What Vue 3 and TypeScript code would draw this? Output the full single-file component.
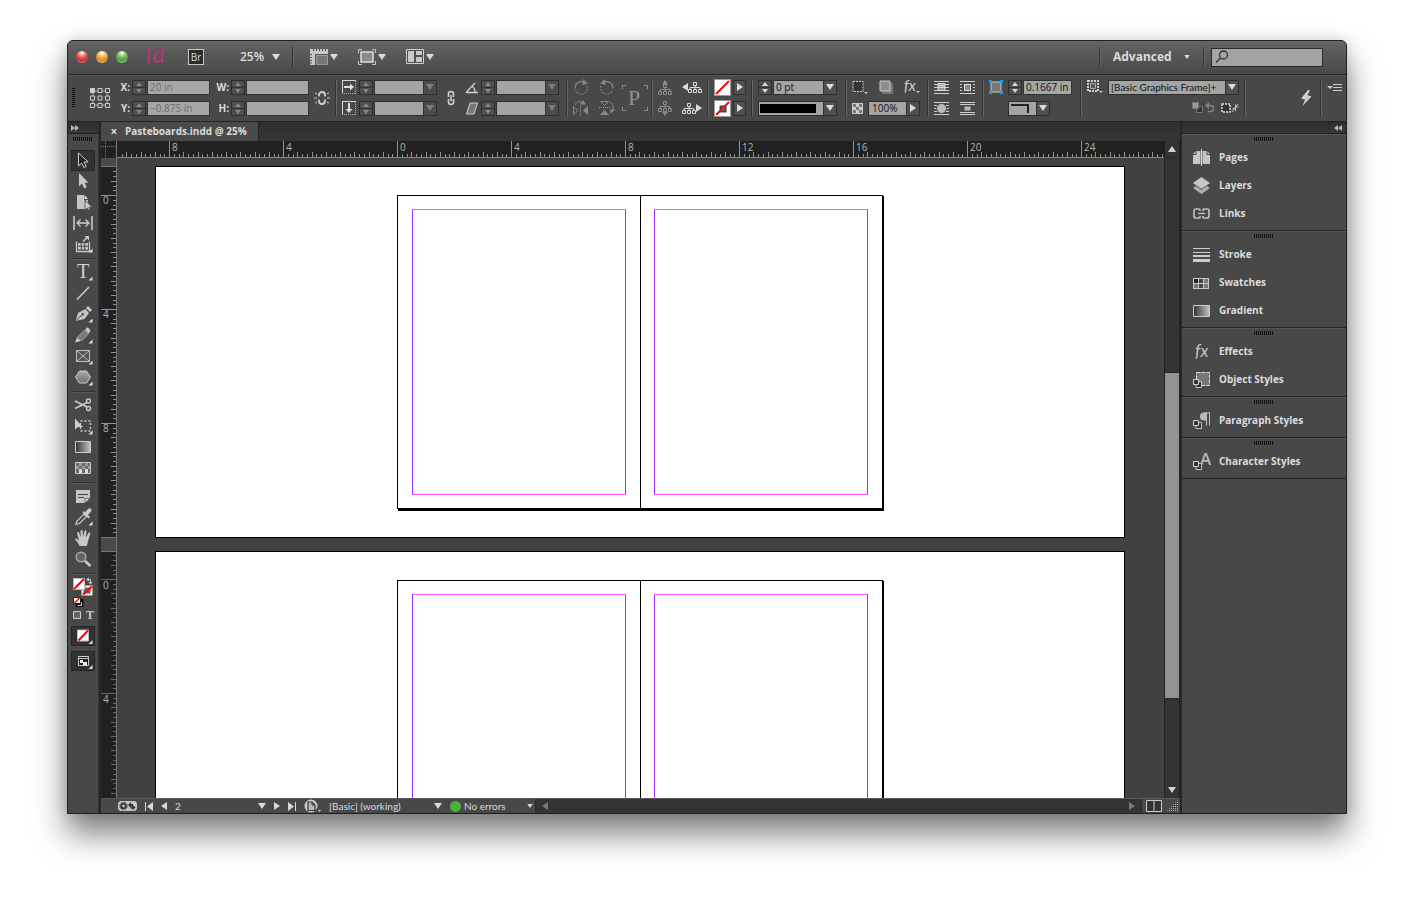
<script setup lang="ts">
import { computed, onBeforeUnmount, onMounted, ref } from 'vue'

interface Tick { pos: number; size: number; label: string }
interface Tool { id: string; name: string; more?: boolean }
interface PanelItem { id: string; name: string }

const PX_PER_INCH = 28.5

function ticks(origin: number, from: number, to: number, full: number): Tick[] {
  const list: Tick[] = []
  const step = PX_PER_INCH / 6
  const first = Math.ceil((from - origin) / step)
  const last = Math.floor((to - origin) / step)
  for (let i = first; i <= last; i++) {
    const labelled = i % 24 === 0
    list.push({
      pos: Math.round(origin + i * step),
      size: labelled ? full : i % 3 === 0 ? 5 : 3,
      label: labelled ? String(Math.abs(i / 6)) : '',
    })
  }
  return list
}

const rulerH = ref<SVGSVGElement | null>(null)
const rulerV = ref<SVGSVGElement | null>(null)
const rulerWidth = ref(0)
const rulerHeight = ref(0)

function measure() {
  rulerWidth.value = rulerH.value?.getBoundingClientRect().width ?? 0
  rulerHeight.value = rulerV.value?.getBoundingClientRect().height ?? 0
}

onMounted(() => {
  measure()
  window.addEventListener('resize', measure)
})
onBeforeUnmount(() => window.removeEventListener('resize', measure))

const horizontal = computed(() => ticks(280, 2, rulerWidth.value - 2, 16))
const verticalTop = ticks(37, 9, 376, 15)
const verticalBottom = computed(() => ticks(421, 394, Math.min(765, rulerHeight.value), 15))

const toolGroups: Tool[][] = [
  [
    { id: 'selection', name: 'Selection Tool' },
    { id: 'direct', name: 'Direct Selection Tool' },
    { id: 'page', name: 'Page Tool' },
    { id: 'gap', name: 'Gap Tool' },
    { id: 'collector', name: 'Content Collector Tool', more: true },
  ],
  [
    { id: 'type', name: 'Type Tool', more: true },
    { id: 'line', name: 'Line Tool' },
    { id: 'pen', name: 'Pen Tool', more: true },
    { id: 'pencil', name: 'Pencil Tool', more: true },
    { id: 'frame', name: 'Rectangle Frame Tool', more: true },
    { id: 'polygon', name: 'Polygon Tool', more: true },
  ],
  [
    { id: 'scissors', name: 'Scissors Tool' },
    { id: 'transform', name: 'Free Transform Tool', more: true },
    { id: 'gradient', name: 'Gradient Swatch Tool' },
    { id: 'feather', name: 'Gradient Feather Tool' },
  ],
  [
    { id: 'note', name: 'Note Tool' },
    { id: 'eyedropper', name: 'Eyedropper Tool', more: true },
    { id: 'hand', name: 'Hand Tool' },
    { id: 'zoom', name: 'Zoom Tool' },
  ],
]

const panels: PanelItem[][] = [
  [{ id: 'p-pages', name: 'Pages' }, { id: 'p-layers', name: 'Layers' }, { id: 'p-links', name: 'Links' }],
  [{ id: 'p-stroke', name: 'Stroke' }, { id: 'p-swatches', name: 'Swatches' }, { id: 'p-gradient', name: 'Gradient' }],
  [{ id: 'p-effects', name: 'Effects' }, { id: 'p-object', name: 'Object Styles' }],
  [{ id: 'p-paragraph', name: 'Paragraph Styles' }],
  [{ id: 'p-character', name: 'Character Styles' }],
]

const viewMenus = [
  { id: 'v-options', name: 'View Options' },
  { id: 'v-screen', name: 'Screen Mode' },
  { id: 'v-arrange', name: 'Arrange Documents' },
]
</script>

<template>
  <svg class="sprite" aria-hidden="true">
    <defs>
      <linearGradient id="lg-dark"><stop offset="0" stop-color="#333" /><stop offset="1" stop-color="#c4c4c4" /></linearGradient>
      <linearGradient id="lg-light" x2="0" y2="1"><stop offset="0" stop-color="#a8a8a8" /><stop offset="1" stop-color="#6f6f6f" /></linearGradient>

      <symbol id="tri-down" viewBox="0 0 8 6"><path d="M0 0h8L4 6z" fill="currentColor" /></symbol>
      <symbol id="tri-right" viewBox="0 0 6 8"><path d="M0 0l6 4-6 4z" fill="currentColor" /></symbol>
      <symbol id="tri-left" viewBox="0 0 6 8"><path d="M6 0L0 4l6 4z" fill="currentColor" /></symbol>
      <symbol id="tri-up" viewBox="0 0 8 6"><path d="M0 6h8L4 0z" fill="currentColor" /></symbol>
      <symbol id="dbl-right" viewBox="0 0 8 6"><path d="M0 0l4 3-4 3zM4 0l4 3-4 3z" fill="currentColor" /></symbol>
      <symbol id="dbl-left" viewBox="0 0 8 6"><path d="M4 0L0 3l4 3zM8 0L4 3l4 3z" fill="currentColor" /></symbol>
      <symbol id="first" viewBox="0 0 8 9"><path d="M0 0h1v9H0zM8 0v9L2 4.500z" fill="currentColor" /></symbol>
      <symbol id="last" viewBox="0 0 8 9"><path d="M7 0h1v9H7zM0 0v9l6-4.500z" fill="currentColor" /></symbol>

      <symbol id="v-options" viewBox="0 0 18 16">
        <path d="M0 0h18v5H5v11H0z" fill="#c8c8c8" />
        <path d="M3.500 0v2M6.500 0v2M9.500 0v2M12.500 0v2M15.500 0v2M0 5.500h2M0 8.500h2M0 11.500h2M0 14h2" stroke="#4a4a4a" fill="none" />
        <path d="M6.500 6.500h11v9h-11z" fill="#777" stroke="#999" />
      </symbol>
      <symbol id="v-screen" viewBox="0 0 18 16">
        <path d="M.5 4V.5H4M14 .5h3.500V4M17.500 12v3.500H14M4 15.500H.5V12" stroke="#c8c8c8" fill="none" />
        <path d="M3 3h12v10H3z" fill="#8a8a8a" stroke="#dedede" stroke-width="1.500" />
      </symbol>
      <symbol id="v-arrange" viewBox="0 0 18 16">
        <path d="M.5 .5h17v14H.5z" fill="#505050" stroke="#d0d0d0" />
        <path d="M2 2h6v11H2zM10 2h6v4h-6zM10 8h6v5h-6z" fill="#c8c8c8" />
      </symbol>

      <symbol id="refpoint" viewBox="0 0 20 20">
        <path d="M3 3h14v14H3z" fill="none" stroke="#a5a5a5" />
        <g fill="#454545" stroke="#cfcfcf">
          <path d="M.5.5h4v4h-4z" fill="#cfcfcf" />
          <path d="M8 .5h4v4H8zM15.500.5h4v4h-4zM.5 8h4v4h-4zM8 8h4v4H8zM15.500 8h4v4h-4zM.5 15.500h4v4h-4zM8 15.500h4v4H8zM15.500 15.500h4v4h-4z" />
        </g>
      </symbol>
      <symbol id="unlinked" viewBox="0 0 16 16">
        <path d="M5 6.500V5a3 3 0 0 1 6 0v1.500M5 9.500V11a3 3 0 0 0 6 0V9.500" fill="none" stroke="#cfcfcf" stroke-width="1.800" />
        <path d="M1 3l2 1M0 8h3M1 13l2-1M15 3l-2 1M16 8h-3M15 13l-2-1" stroke="#cfcfcf" />
      </symbol>
      <symbol id="linked" viewBox="0 0 10 16">
        <path d="M2.500 7V4a2.500 2.500 0 0 1 5 0v3M2.500 9v3a2.500 2.500 0 0 0 5 0V9M5 5v6" fill="none" stroke="#cfcfcf" stroke-width="1.600" />
      </symbol>
      <symbol id="scale-x" viewBox="0 0 14 14">
        <path d="M0 .5h14M.5 1v12" stroke="#d5d5d5" /><path d="M13.500 1v13M0 13.500h14" stroke="#aaa" stroke-dasharray="1 1" />
        <path d="M2 7h6" stroke="#ddd" stroke-width="2" /><path d="M8 3.500L12 7l-4 3.500z" fill="#ddd" />
      </symbol>
      <symbol id="scale-y" viewBox="0 0 14 14">
        <path d="M0 .5h14M.5 1v12" stroke="#d5d5d5" /><path d="M13.500 1v13M0 13.500h14" stroke="#aaa" stroke-dasharray="1 1" />
        <path d="M7 2v6" stroke="#ddd" stroke-width="2" /><path d="M3.500 8L7 12l3.500-4z" fill="#ddd" />
      </symbol>
      <symbol id="angle" viewBox="0 0 14 14"><path d="M1 12.500h12M1.500 12L10 3M7 6.500c2 1 3 3 3 6" fill="none" stroke="#cfcfcf" stroke-width="1.300" /></symbol>
      <symbol id="shear" viewBox="0 0 14 14"><path d="M5 2h7.500L9 13H1.500z" fill="#777" stroke="#cfcfcf" /></symbol>
      <symbol id="rot-cw" viewBox="0 0 16 16">
        <path d="M2.200 9.500A6 6 0 0 1 11 3.500" fill="none" stroke="#8a8a8a" stroke-width="1.300" /><path d="M14 7a6 6 0 0 1-11.500 4" fill="none" stroke="#8a8a8a" stroke-width="1.300" stroke-dasharray="1.500 1.500" /><path d="M10 0l5 4.500-5.500 1.500z" fill="#8a8a8a" />
      </symbol>
      <symbol id="rot-ccw" viewBox="0 0 16 16">
        <path d="M13.800 9.500A6 6 0 0 0 5 3.500" fill="none" stroke="#8a8a8a" stroke-width="1.300" /><path d="M2 7a6 6 0 0 0 11.500 4" fill="none" stroke="#8a8a8a" stroke-width="1.300" stroke-dasharray="1.500 1.500" /><path d="M6 0L1 4.500 6.500 6z" fill="#8a8a8a" />
      </symbol>
      <symbol id="flip-h" viewBox="0 0 16 16">
        <path d="M7.500 1v15" stroke="#999" stroke-dasharray="1 1" /><path d="M15 6v9l-5-4.500z" fill="#8a8a8a" /><path d="M.5 6.500v8l4.500-4z" fill="none" stroke="#8a8a8a" />
        <path d="M2 5c1-3.500 6-4.500 9-2" fill="none" stroke="#8a8a8a" /><path d="M10 0l3 4.500-5 0z" fill="#8a8a8a" />
      </symbol>
      <symbol id="flip-v" viewBox="0 0 16 16">
        <path d="M0 7.500h12" stroke="#999" stroke-dasharray="1 1" /><path d="M1 15h9l-4.500-5z" fill="#8a8a8a" /><path d="M1.500 1.500h8l-4 4z" fill="none" stroke="#8a8a8a" />
        <path d="M11 2c3 2 4 5 2.500 9" fill="none" stroke="#8a8a8a" /><path d="M16 10l-4.500 3.500V9z" fill="#8a8a8a" />
      </symbol>
      <symbol id="container" viewBox="0 0 26 26">
        <path d="M.5 4V.5H4M22 .5h3.500V4M25.500 22v3.500H22M4 25.500H.5V22" stroke="#8f8f8f" fill="none" />
        <text x="6" y="20" font-family="Liberation Serif, serif" font-size="22" fill="#8f8f8f">P</text>
      </symbol>
      <symbol id="tree" viewBox="0 0 14 11">
        <path d="M7 3v5M2 8V5.500h10V8" fill="none" stroke="currentColor" /><path d="M5.500.5h3v3h-3zM.5 7.500h3v3h-3zM5.500 7.500h3v3h-3zM10.500 7.500h3v3h-3z" fill="#484848" stroke="currentColor" />
      </symbol>
      <symbol id="sw-none" viewBox="0 0 17 17"><path d="M.5.5h16v16H.5z" fill="#fff" stroke="#999" /><path d="M2 15L15 2" stroke="#f00" stroke-width="2" /></symbol>
      <symbol id="sw-stroke" viewBox="0 0 17 17"><path d="M.5.5h16v16H.5z" fill="#fff" stroke="#999" /><path d="M6.500 6.500h5v5h-5z" fill="#888" stroke="#444" stroke-width="2" /><path d="M2 15L15 2" stroke="#f00" stroke-width="2" /></symbol>
      <symbol id="dashbox" viewBox="0 0 16 14"><path d="M1 1.500h10v10H1z" fill="#333" stroke="#cfcfcf" stroke-dasharray="2 1" /><path d="M12 12h4l-2 2z" fill="#ccc" /></symbol>
      <symbol id="shadowbox" viewBox="0 0 14 14"><path d="M3 3h11v11H3z" fill="#777" /><path d="M1 1h10v10H1z" fill="#8d8d8d" stroke="#c8c8c8" /></symbol>
      <symbol id="fx" viewBox="0 0 17 16"><text x="1" y="12" font-family="Lato, sans-serif" font-size="15" font-style="italic" fill="#cfcfcf">fx</text><path d="M13 12h4l-2 2z" fill="#ccc" /></symbol>
      <symbol id="opacity" viewBox="0 0 11 11"><path d="M0 0h11v11H0z" fill="#ccc" /><path d="M1 1h3v3H1zM7 1h3v3H7zM4 4h3v3H4zM1 7h3v3H1zM7 7h3v3H7z" fill="#777" /></symbol>
      <symbol id="wrap-none" viewBox="0 0 15 14"><path d="M0 1.500h15M0 4.500h15M0 7.500h15M0 10.500h15M0 13.500h15" stroke="#cfcfcf" /><path d="M4 3.500h7v7H4z" fill="#999" stroke="#ddd" /><path d="M4 5.500h7M4 7.500h7" stroke="#ddd" /></symbol>
      <symbol id="wrap-box" viewBox="0 0 15 14"><path d="M0 1.500h15M0 13.500h15M0 4.500h2M13 4.500h2M0 7.500h2M13 7.500h2M0 10.500h2M13 10.500h2" stroke="#cfcfcf" /><path d="M4.500 4.500h6v6h-6z" fill="#888" stroke="#ddd" /></symbol>
      <symbol id="wrap-shape" viewBox="0 0 15 14"><path d="M0 1.500h15M0 4.500h15M0 7.500h15M0 10.500h15M0 13.500h15" stroke="#cfcfcf" /><circle cx="7.500" cy="7.500" r="5" fill="#bbb" stroke="#484848" /></symbol>
      <symbol id="wrap-jump" viewBox="0 0 15 14"><path d="M0 1.500h15M0 3.500h15M0 11.500h15M0 13.500h15" stroke="#cfcfcf" /><path d="M4.500 5.500h6v4h-6z" fill="#bbb" /></symbol>
      <symbol id="corner" viewBox="0 0 14 14"><path d="M2 2h10v10H2z" fill="#777" stroke="#ccc" /><path d="M0 0h3v3H0zM11 0h3v3h-3zM0 11h3v3H0zM11 11h3v3h-3z" fill="#13a3f5" /></symbol>
      <symbol id="frame-style" viewBox="0 0 16 14"><path d="M1 1h10v10H1z" fill="none" stroke="#cfcfcf" stroke-width="2" stroke-dasharray="2 1" /><path d="M3.500 3.500h5v5h-5z" fill="#555" stroke="#aaa" /><path d="M12 11h4l-2 2z" fill="#ccc" /></symbol>
      <symbol id="clear" viewBox="0 0 22 12"><path d="M4.500 4.500h6v6h-6z" fill="#333" stroke="#777" /><path d="M.5.5h6v6h-6z" fill="#999" stroke="#777" /><path d="M15 3.500h3.500a3 3 0 0 1 0 6H16" fill="none" stroke="#858585" stroke-width="1.500" /><path d="M13 3.500L17 0v7z" fill="#858585" /></symbol>
      <symbol id="redefine" viewBox="0 0 18 12"><path d="M1 2h8v8H1z" fill="#333" stroke="#ddd" stroke-width="1.500" stroke-dasharray="2 1" /><path d="M11 10l6-8M11.500 6.500h3V9M17.500 5h-3V2.500" fill="none" stroke="#c8c8c8" /></symbol>
      <symbol id="bolt" viewBox="0 0 12 16"><path d="M8 0L1 8.500l4 1L2.500 16 11.500 6.500l-4-1.200L10 0z" fill="#cfcfcf" /></symbol>
      <symbol id="panel-menu" viewBox="0 0 15 10"><path d="M0 3h6L3 6z" fill="#ccc" /><path d="M6 1.500h9M6 4.500h9M6 7.500h9" stroke="#ccc" /></symbol>
      <symbol id="search" viewBox="0 0 14 14"><circle cx="8.500" cy="5" r="4" fill="none" stroke="#333" stroke-width="1.300" /><path d="M5.500 8L1 12.500" stroke="#333" stroke-width="1.500" /></symbol>

      <symbol id="selection" viewBox="0 0 24 21"><path d="M7.500 3v13l3.200-3 2.200 4.500 2.300-1-2.200-4.500h4.200z" fill="#222" stroke="#cfcfcf" /></symbol>
      <symbol id="direct" viewBox="0 0 24 21"><path d="M8 2v13.500l3-3 2.200 5 2.500-1.200-2.200-4.600h4z" fill="#c8c8c8" /></symbol>
      <symbol id="page" viewBox="0 0 24 21"><path d="M6 3h7v5h4v9H6z" fill="#c4c4c4" /><path d="M13.500 3l3.500 4h-3.500z" fill="#ddd" /><path d="M14 8v10l2.500-2 1.200 2.500 1.500-.8-1.200-2.400H21z" fill="#ccc" stroke="#444" stroke-width=".8" /></symbol>
      <symbol id="gap" viewBox="0 0 24 21"><path d="M3 3v14M21 3v14" stroke="#c8c8c8" stroke-width="1.600" /><path d="M6 10h12M9.500 6.500L6 10l3.500 3.500M14.500 6.500L18 10l-3.500 3.500" fill="none" stroke="#cfcfcf" stroke-width="1.300" /></symbol>
      <symbol id="collector" viewBox="0 0 24 21"><path d="M5.500 7.500v10h13v-10" fill="none" stroke="#c8c8c8" stroke-width="1.300" /><path d="M7 9h10v6.500H7z" fill="#c8c8c8" /><path d="M7 12.200h10M10.200 9v7M13.700 9v7" stroke="#4a4a4a" /><path d="M11.500 8l5-5" stroke="#4a4a4a" stroke-width="4" /><path d="M12 7.500l4-4" stroke="#ccc" stroke-width="1.600" /><path d="M13.500 2H18v4.500z" fill="#ccc" /></symbol>
      <symbol id="type" viewBox="0 0 24 21"><text x="6" y="16" font-family="Liberation Serif, serif" font-size="20" font-weight="400" fill="#d0d0d0">T</text></symbol>
      <symbol id="line" viewBox="0 0 24 21"><path d="M6 16.500L18 4" stroke="#cfcfcf" stroke-width="1.500" /></symbol>
      <symbol id="pen" viewBox="0 0 24 21"><path d="M4.500 17l2.500-8 7.500-4 3.500 4-4.500 6z" fill="#c4c4c4" /><path d="M15 4l2-2 4 4-2 2z" fill="#ccc" /><path d="M5 16.500l6-5.500" stroke="#444" /><circle cx="11.800" cy="10.300" r="1.200" fill="#444" /></symbol>
      <symbol id="pencil" viewBox="0 0 24 21"><path d="M4 17.500l2-5 4 3.500z" fill="#ccc" /><path d="M6.500 12l7-7 4 4-7 7z" fill="#7c7c7c" stroke="#aaa" stroke-width=".8" /><path d="M14 4.500L16 2.500q2 0 3.500 3.500L17.500 8.500z" fill="#c8c8c8" /></symbol>
      <symbol id="frame" viewBox="0 0 24 21"><path d="M5.500 4.500h13v11h-13zM5.500 4.500l13 11M18.500 4.500l-13 11" fill="#555" stroke="#c0c0c0" stroke-width="1" /></symbol>
      <symbol id="polygon" viewBox="0 0 24 21"><path d="M8.500 4h7l4 6-4 6h-7l-4-6z" fill="url(#lg-light)" stroke="#cfcfcf" /></symbol>
      <symbol id="scissors" viewBox="0 0 24 21"><path d="M4 6l12 6M4 13.500L16 7.500" stroke="#c8c8c8" stroke-width="1.800" /><circle cx="17.500" cy="6" r="2" fill="none" stroke="#ccc" stroke-width="1.300" /><circle cx="17.500" cy="13.500" r="2" fill="none" stroke="#ccc" stroke-width="1.300" /></symbol>
      <symbol id="transform" viewBox="0 0 24 21"><path d="M9.500 5h10v10h-10z" fill="none" stroke="#ccc" stroke-width="1.300" stroke-dasharray="2 2" /><path d="M4 2.500v11l3-2.500h5z" fill="#ccc" /></symbol>
      <symbol id="gradient" viewBox="0 0 24 21"><path d="M4.500 4.500h15v11h-15z" fill="url(#lg-dark)" stroke="#ccc" /></symbol>
      <symbol id="feather" viewBox="0 0 24 21"><path d="M4.500 4.500h15v11h-15z" fill="#6a6a6a" stroke="#ccc" /><path d="M8 5h3v3H8zM14 5h3v3h-3zM5 8h3v3H5zM11 8h3v3h-3zM17 8h2v3h-2z" fill="#999" /><path d="M8 11h3v4H8zM14 11h3v4h-3z" fill="#ddd" /></symbol>
      <symbol id="note" viewBox="0 0 24 21"><path d="M5 4h14v8l-5 5H5z" fill="#c6c6c6" /><path d="M7 8.500h10M7 11.500h6" stroke="#444" /><path d="M14 17v-4.500h5z" fill="#ddd" stroke="#555" stroke-width=".8" /></symbol>
      <symbol id="eyedropper" viewBox="0 0 24 21"><path d="M5 17.500l1-3.500 7-7 2.500 2.500-7 7z" fill="none" stroke="#ccc" stroke-width="1.200" /><path d="M11.500 5.500L13 4l6 6-1.500 1.500z" fill="#ccc" /><path d="M14 5.500L17 2a1.800 1.800 0 0 1 3 2.500L16.500 8.500z" fill="#ccc" /></symbol>
      <symbol id="hand" viewBox="0 0 24 21"><path d="M8.500 18c-1-3-3-4.500-4.500-7 1-1.500 3 .5 4 1.500L6 5c.5-1.500 2-1 2.300.3L9.700 9.500 9.500 3c.3-1.500 2-1.500 2.200 0L12 9l1.500-6c.5-1.300 2-1 2 .5l-.6 6 2.600-4.500c.8-1 2-.4 1.700.8L17 13.500 15.800 18z" fill="#c8c8c8" /></symbol>
      <symbol id="zoom" viewBox="0 0 24 21"><circle cx="10" cy="8" r="4.800" fill="#666" stroke="#aaa" stroke-width="1.500" /><path d="M14 12l5.500 5" stroke="#ccc" stroke-width="2.500" /></symbol>
      <symbol id="more" viewBox="0 0 24 21"><path d="M21.500 14.500v4h-4z" fill="#ddd" /></symbol>
      <symbol id="colors" viewBox="0 0 24 44">
        <path d="M11.500 9.500h9v8h-9z" fill="#666" stroke="#eee" stroke-width="2" /><path d="M12 17.500l9-8" stroke="#f00" stroke-width="2" />
        <path d="M2.500 1.500h11v11h-11z" fill="#fff" stroke="#bbb" /><path d="M3 12L13 2" stroke="#f00" stroke-width="2" />
        <path d="M17 2.500h2.500V6" fill="none" stroke="#ccc" /><path d="M15 2.500L18 .5v4zM17.500 5h4l-2 2.500z" fill="#ccc" />
        <path d="M5.500 23h6v6h-6z" fill="#111" stroke="#111" stroke-width="2" /><path d="M7.500 25.500h3v3h-4" fill="none" stroke="#ccc" />
        <path d="M2.500 20.500h7v6h-7z" fill="#fff" stroke="#222" /><path d="M3 26.500l6-6" stroke="#f00" stroke-width="1.500" />
        <path d="M2.500 34.500h7v7h-7z" fill="#666" stroke="#ccc" />
        <text x="15" y="42" font-family="Liberation Serif, serif" font-weight="bold" font-size="12" fill="#ccc">T</text>
      </symbol>
      <symbol id="apply-none" viewBox="0 0 24 20"><path d="M6.500 4h11v11h-11z" fill="#fff" stroke="#bbb" /><path d="M7.500 14.500l9.500-10" stroke="#f00" stroke-width="2" /><path d="M21.500 14v4h-4z" fill="#ddd" /></symbol>
      <symbol id="screen-mode" viewBox="0 0 24 20"><path d="M7.500 5.500h10v9h-10z" fill="#222" stroke="#ccc" /><path d="M8 7.500h10" stroke="#ccc" /><path d="M9 9h3v3H9zM12 11h4v3h-4z" fill="#eee" /><path d="M21.500 14v4h-4z" fill="#ddd" /></symbol>

      <symbol id="p-pages" viewBox="0 0 19 18"><path d="M1 5l3-3h4.500v13H1zM18 5l-3-3h-4.500v13H18z" fill="#c6c6c6" /><path d="M9.500 0v17" stroke="#ddd" /><path d="M1 5.500h3V2M18 5.500h-3V2" fill="none" stroke="#444" /></symbol>
      <symbol id="p-layers" viewBox="0 0 19 18"><path d="M9.500 0L18 6l-8.500 6L1 6z" fill="#c6c6c6" /><path d="M1 11l3-2 5.500 4 5.500-4 3 2-8.500 6z" fill="#b0b0b0" /></symbol>
      <symbol id="p-links" viewBox="0 0 19 18"><path d="M8 6V5a1 1 0 0 0-1-1H4A2 2 0 0 0 2 6v5a2 2 0 0 0 2 2h3a1 1 0 0 0 1-1v-1M11 6V5a1 1 0 0 1 1-1h3a2 2 0 0 1 2 2v5a2 2 0 0 1-2 2h-3a1 1 0 0 1-1-1v-1M6 8.500h7" fill="none" stroke="#bdbdbd" stroke-width="1.700" /></symbol>
      <symbol id="p-stroke" viewBox="0 0 19 18"><path d="M1 2.500h17" stroke="#ccc" /><path d="M1 6.500h17" stroke="#ccc" /><path d="M1 10h17" stroke="#ccc" stroke-width="2" /><path d="M1 14.500h17" stroke="#ccc" stroke-width="3" /></symbol>
      <symbol id="p-swatches" viewBox="0 0 19 18"><path d="M1 4h16v11H1z" fill="#ccc" /><path d="M2 5h4v4H2z" fill="#222" /><path d="M7 5h4v4H7zM7 10h4v4H7z" fill="#444" /><path d="M2 10h4v4H2zM12 5h4v4h-4zM12 10h4v4h-4z" fill="#777" /></symbol>
      <symbol id="p-gradient" viewBox="0 0 19 18"><path d="M1.500 3.500h16v11h-16z" fill="url(#lg-dark)" stroke="#ccc" /></symbol>
      <symbol id="p-effects" viewBox="0 0 19 18"><text x="3" y="14" font-family="Lato, sans-serif" font-size="17" font-weight="400" font-style="italic" fill="#c4c4c4">fx</text></symbol>
      <symbol id="styles" viewBox="0 0 19 18"><path d="M4 10.500h5.500v6H4z" fill="#333" stroke="#c4c4c4" /><path d="M1.500 8.500h5v5h-5z" fill="#333" stroke="#d4d4d4" /></symbol>
      <symbol id="p-object" viewBox="0 0 19 18"><path d="M4.500 1.500h13v13h-13z" fill="#777" stroke="#ddd" stroke-dasharray="4 1" /><use href="#styles" /></symbol>
      <symbol id="p-paragraph" viewBox="0 0 19 18"><path d="M12 8.500a4 4 0 0 1 0-8h2v8z" fill="#b8b8b8" /><path d="M14.500 .5v13M17.500 .5v13M12 1h6" stroke="#c4c4c4" fill="none" /><use href="#styles" /></symbol>
      <symbol id="p-character" viewBox="0 0 19 18"><text x="8" y="12" font-family="Open Sans, sans-serif" font-size="17" font-weight="600" fill="#b8b8b8">A</text><use href="#styles" /></symbol>

      <symbol id="gears" viewBox="0 0 19 10"><path d="M2 0h15l2 2v6l-2 2H2L0 8V2z" fill="#c4c4c4" /><circle cx="5.500" cy="5" r="2.300" fill="none" stroke="#333" stroke-width="1.800" /><circle cx="5.500" cy="5" r="3.800" fill="none" stroke="#333" stroke-dasharray="1.500 1.500" /><path d="M10 4l3-3v2h2v2h-2v2zM17.500 6.500l-3 3v-2h-2v-2h2v-2z" fill="#333" /></symbol>
      <symbol id="preflight-doc" viewBox="0 0 17 14"><circle cx="7" cy="7" r="6.500" fill="#ccc" /><path d="M4 3h4l3 3v5.500H4z" fill="#bbb" stroke="#333" stroke-width="1.200" /><path d="M8 3v3h3" fill="none" stroke="#333" /><path d="M14 11h3l-1.500 2z" fill="#ccc" /></symbol>
      <symbol id="split" viewBox="0 0 16 12"><path d="M.5.5h15v11H.5zM8 .5v11" fill="#333" stroke="#ccc" /></symbol>
    </defs>
  </svg>

  <main class="desktop">
    <section class="window" aria-label="Pasteboards.indd">
      <header class="titlebar">
        <div class="lights">
          <button class="light red" aria-label="Close"></button>
          <button class="light amber" aria-label="Minimize"></button>
          <button class="light green" aria-label="Zoom"></button>
        </div>
        <span class="logo">Id</span>
        <button class="bridge" aria-label="Go to Bridge">Br</button>
        <button class="zoom-level">25% <svg class="t8"><use href="#tri-down" /></svg></button>
        <span class="sep"></span>
        <div class="views">
          <button v-for="v in viewMenus" :key="v.id" class="view-menu" :aria-label="v.name">
            <svg class="view-icon"><use :href="'#' + v.id" /></svg><svg class="t8"><use href="#tri-down" /></svg>
          </button>
        </div>
        <span class="grow"></span>
        <span class="sep"></span>
        <button class="workspace">Advanced <svg class="t5"><use href="#tri-down" /></svg></button>
        <span class="sep"></span>
        <label class="search"><svg class="s14"><use href="#search" /></svg><input type="search" aria-label="Search" /></label>
      </header>

      <div class="control" role="toolbar" aria-label="Control">
        <span class="grip-v"></span>
        <button class="refpoint" aria-label="Reference point"><svg class="s20"><use href="#refpoint" /></svg></button>
        <div class="rows position">
          <div class="row"><label for="x">X:</label><span class="spin off"><button aria-label="X up"></button><button aria-label="X down"></button></span><input id="x" class="field" value="20 in" disabled /></div>
          <div class="row"><label for="y">Y:</label><span class="spin off"><button aria-label="Y up"></button><button aria-label="Y down"></button></span><input id="y" class="field" value="−0.875 in" disabled /></div>
        </div>
        <div class="rows position">
          <div class="row"><label for="w">W:</label><span class="spin off"><button aria-label="Width up"></button><button aria-label="Width down"></button></span><input id="w" class="field" disabled /></div>
          <div class="row"><label for="h">H:</label><span class="spin off"><button aria-label="Height up"></button><button aria-label="Height down"></button></span><input id="h" class="field" disabled /></div>
        </div>
        <button class="ml5" aria-label="Constrain proportions"><svg class="s16"><use href="#unlinked" /></svg></button>
        <span class="bar"></span>
        <div class="rows">
          <div v-for="k in ['x', 'y']" :key="k" class="row g3">
            <svg class="s14"><use :href="'#scale-' + k" /></svg>
            <span class="pair"><span class="spin off"><button :aria-label="'Scale up ' + k"></button><button :aria-label="'Scale down ' + k"></button></span>
              <span class="combo w63 off"><select :aria-label="'Scale ' + k" disabled></select><i><svg class="t8"><use href="#tri-down" /></svg></i></span></span>
          </div>
        </div>
        <button class="ml9" aria-label="Constrain scaling"><svg class="link"><use href="#linked" /></svg></button>
        <div class="rows ml9">
          <div v-for="k in ['angle', 'shear']" :key="k" class="row g2">
            <svg class="s14"><use :href="'#' + k" /></svg>
            <span class="pair"><span class="spin off"><button :aria-label="k + ' up'"></button><button :aria-label="k + ' down'"></button></span>
              <span class="combo w63 off"><select :aria-label="k" disabled></select><i><svg class="t8"><use href="#tri-down" /></svg></i></span></span>
          </div>
        </div>
        <span class="bar"></span>
        <div class="rows">
          <div class="row g10"><button aria-label="Rotate clockwise"><svg class="s16"><use href="#rot-cw" /></svg></button><button aria-label="Rotate counter-clockwise"><svg class="s16"><use href="#rot-ccw" /></svg></button></div>
          <div class="row g10"><button aria-label="Flip horizontal"><svg class="s16"><use href="#flip-h" /></svg></button><button aria-label="Flip vertical"><svg class="s16"><use href="#flip-v" /></svg></button></div>
        </div>
        <svg class="container"><use href="#container" /></svg>
        <span class="bar tight"></span>
        <div class="rows trees">
          <div class="row"><button class="dim stack" aria-label="Select container"><svg class="t6"><use href="#tri-up" /></svg><svg class="tree"><use href="#tree" /></svg></button><button aria-label="Select previous object"><svg class="tl"><use href="#tri-left" /></svg><svg class="tree"><use href="#tree" /></svg></button></div>
          <div class="row"><button class="dim stack" aria-label="Select content"><svg class="tree"><use href="#tree" /></svg><svg class="t6"><use href="#tri-down" /></svg></button><button aria-label="Select next object"><svg class="tree"><use href="#tree" /></svg><svg class="tl"><use href="#tri-right" /></svg></button></div>
        </div>
        <span class="bar tight"></span>
        <div class="rows">
          <div class="row g2"><button aria-label="Fill"><svg class="s17"><use href="#sw-none" /></svg></button><button class="go" aria-label="Fill options"><svg class="tl"><use href="#tri-right" /></svg></button></div>
          <div class="row g2"><button aria-label="Stroke"><svg class="s17"><use href="#sw-stroke" /></svg></button><button class="go" aria-label="Stroke options"><svg class="tl"><use href="#tri-right" /></svg></button></div>
        </div>
        <span class="bar tight"></span>
        <div class="rows">
          <div class="row pair"><span class="spin"><button aria-label="Weight up"></button><button aria-label="Weight down"></button></span><span class="combo w64"><select aria-label="Stroke weight"><option>0 pt</option></select><i><svg class="t8"><use href="#tri-down" /></svg></i></span></div>
          <div class="row"><span class="combo w79"><span class="solid"></span><select aria-label="Stroke type"></select><i><svg class="t8"><use href="#tri-down" /></svg></i></span></div>
        </div>
        <span class="bar wide"></span>
        <div class="rows">
          <div class="row between"><button aria-label="Apply effect to"><svg class="s16"><use href="#dashbox" /></svg></button><button aria-label="Drop shadow"><svg class="s14"><use href="#shadowbox" /></svg></button><button aria-label="Effects"><svg class="fx"><use href="#fx" /></svg></button></div>
          <div class="row g5"><svg class="s11"><use href="#opacity" /></svg><span class="opacity"><input aria-label="Opacity" value="100%" /><button class="go" aria-label="Opacity slider"><svg class="tl"><use href="#tri-right" /></svg></button></span></div>
        </div>
        <span class="bar"></span>
        <div class="rows">
          <div class="row g11"><button aria-label="No text wrap"><svg class="wrap"><use href="#wrap-none" /></svg></button><button aria-label="Wrap around box"><svg class="wrap"><use href="#wrap-box" /></svg></button></div>
          <div class="row g11"><button aria-label="Wrap around shape"><svg class="wrap"><use href="#wrap-shape" /></svg></button><button aria-label="Jump object"><svg class="wrap"><use href="#wrap-jump" /></svg></button></div>
        </div>
        <span class="bar"></span>
        <div class="rows corners">
          <div class="row g5"><svg class="s14"><use href="#corner" /></svg><span class="pair"><span class="spin"><button aria-label="Corner up"></button><button aria-label="Corner down"></button></span><input class="field bright w49" aria-label="Corner size" value="0.1667 in" /></span></div>
          <div class="row indent"><span class="combo w42"><span class="hook"></span><select aria-label="Corner shape"></select><i><svg class="t8"><use href="#tri-down" /></svg></i></span></div>
        </div>
        <span class="bar wide"></span>
        <div class="rows">
          <div class="row g5"><svg class="s16"><use href="#frame-style" /></svg><span class="combo w131"><select aria-label="Object style"><option>[Basic Graphics Frame]+</option></select><i><svg class="t8"><use href="#tri-down" /></svg></i></span></div>
          <div class="row end g7"><button aria-label="Clear overrides"><svg class="clear"><use href="#clear" /></svg></button><button aria-label="Redefine style"><svg class="redefine"><use href="#redefine" /></svg></button></div>
        </div>
        <span class="bar tight"></span>
        <span class="grow"></span>
        <button aria-label="Quick Apply"><svg class="bolt"><use href="#bolt" /></svg></button>
        <span class="bar last"></span>
        <button class="menu" aria-label="Panel menu"><svg class="menu-icon"><use href="#panel-menu" /></svg></button>
      </div>

      <div class="body">
        <nav class="toolbox" aria-label="Tools">
          <button class="dock-head left" aria-label="Expand tools"><svg class="dbl"><use href="#dbl-right" /></svg></button>
          <span class="grip-h"></span>
          <div class="tools">
            <div v-for="(g, gi) in toolGroups" :key="gi" class="tool-group">
              <button v-for="t in g" :key="t.id" class="tool" :class="{ active: t.id === 'selection' }" :aria-label="t.name">
                <svg><use :href="'#' + t.id" /><use v-if="t.more" href="#more" /></svg>
              </button>
            </div>
            <button class="colors" aria-label="Fill and stroke"><svg><use href="#colors" /></svg></button>
            <button class="mode" aria-label="Apply None"><svg><use href="#apply-none" /></svg></button>
            <button class="mode" aria-label="Screen Mode"><svg><use href="#screen-mode" /></svg></button>
          </div>
        </nav>

        <section class="document">
          <div class="tabs">
            <div class="tab"><button class="close" aria-label="Close tab">×</button><span>Pasteboards.indd @ 25%</span></div>
          </div>
          <div class="ruler-corner"></div>
          <svg ref="rulerH" class="ruler-h" aria-hidden="true">
            <g v-for="t in horizontal" :key="t.pos">
              <rect :x="t.pos" :y="16 - t.size" width="1" :height="t.size" fill="#929292" />
              <text v-if="t.label" :x="t.pos + 3" y="10">{{ t.label }}</text>
            </g>
            <rect x="0" y="16" width="100%" height="1" fill="#8a8a8a" />
          </svg>
          <svg ref="rulerV" class="ruler-v" aria-hidden="true">
            <rect y="8" width="16" height="372" fill="#212121" />
            <rect y="393" width="16" height="372" fill="#212121" />
            <path d="M0 8.500h15M0 379.500h15M0 393.500h15" stroke="#777" />
            <g v-for="t in verticalTop" :key="t.pos">
              <rect :x="15 - t.size" :y="t.pos" :width="t.size" height="1" fill="#929292" />
              <text v-if="t.label" x="2" :y="t.pos + 9">{{ t.label }}</text>
            </g>
            <g v-for="t in verticalBottom" :key="t.pos">
              <rect :x="15 - t.size" :y="t.pos" :width="t.size" height="1" fill="#666" />
              <text v-if="t.label" x="2" :y="t.pos + 10">{{ t.label }}</text>
            </g>
            <rect x="15" width="1" height="100%" fill="#777" />
          </svg>
          <div class="canvas">
            <div v-for="s in 2" :key="s" class="pasteboard">
              <div class="spread">
                <div class="sheet"><div class="margins"></div></div>
                <div class="sheet"><div class="margins"></div></div>
              </div>
            </div>
          </div>
          <div class="scroll-v">
            <button aria-label="Scroll up"><svg class="t8"><use href="#tri-up" /></svg></button>
            <div class="track"><div class="before"></div><div class="thumb"></div><div class="after"></div></div>
            <button aria-label="Scroll down"><svg class="t8"><use href="#tri-down" /></svg></button>
          </div>
          <footer class="status">
            <button aria-label="Linked resources"><svg class="gears"><use href="#gears" /></svg></button>
            <button aria-label="First spread"><svg class="step"><use href="#first" /></svg></button>
            <button aria-label="Previous spread"><svg class="tl"><use href="#tri-left" /></svg></button>
            <button class="page-no"><span>2</span><svg class="t8"><use href="#tri-down" /></svg></button>
            <button aria-label="Next spread"><svg class="tl"><use href="#tri-right" /></svg></button>
            <button aria-label="Last spread"><svg class="step"><use href="#last" /></svg></button>
            <button aria-label="Open document menu"><svg class="pre"><use href="#preflight-doc" /></svg></button>
            <button class="profile"><span>[Basic] (working)</span><svg class="t8"><use href="#tri-down" /></svg></button>
            <button class="errors"><span class="dot"></span><span>No errors</span><svg class="t5"><use href="#tri-down" /></svg></button>
            <div class="scroll-h"><button aria-label="Scroll left"><svg class="tl"><use href="#tri-left" /></svg></button><button aria-label="Scroll right"><svg class="tl"><use href="#tri-right" /></svg></button></div>
            <button class="split" aria-label="Split window"><svg><use href="#split" /></svg></button>
            <span class="resize"></span>
          </footer>
        </section>

        <aside class="dock" aria-label="Panels">
          <button class="dock-head right" aria-label="Expand panels"><svg class="dbl"><use href="#dbl-left" /></svg></button>
          <div v-for="(g, gi) in panels" :key="gi" class="panel-group">
            <span class="grip-h"></span>
            <button v-for="p in g" :key="p.id" class="panel"><svg><use :href="'#' + p.id" /></svg><span>{{ p.name }}</span></button>
          </div>
        </aside>
      </div>
    </section>
  </main>
</template>

<style>
html, body { margin: 0; background: #fff; }
</style>

<style scoped>
* { box-sizing: border-box; }
.sprite { position: absolute; width: 0; height: 0; }
svg { display: block; flex: none; }
button { margin: 0; padding: 0; border: 0; background: none; color: inherit; font: inherit; display: flex; align-items: center; flex: none; white-space: nowrap; }
input, select { margin: 0; padding: 0; border: 0; border-radius: 0; outline: 0; font: inherit; color: inherit; background: none; appearance: none; min-width: 0; }
.desktop { height: 100vh; padding: 40px 67px 89px; display: flex; font: 11px/15px "Lato", "Open Sans", sans-serif; color: #dcdcdc; overflow: hidden; background: #fff; }
.window { flex: 1; min-width: 0; display: flex; flex-direction: column; border: 1px solid #202020; border-radius: 6px 6px 0 0; overflow: hidden; background: #484848; box-shadow: 0 20px 32px rgba(0, 0, 0, .5), 0 0 14px rgba(0, 0, 0, .15); }
.grow { flex: 1; }
.t8 { width: 8px; height: 6px; }
.t6 { width: 6px; height: 4px; }
.t5 { width: 6px; height: 4px; }
.tl { width: 6px; height: 8px; }
.s11 { width: 11px; height: 11px; }
.s14 { width: 14px; height: 14px; }
.s16 { width: 16px; height: 16px; }
.s17 { width: 17px; height: 17px; }
.s20 { width: 20px; height: 20px; }

.titlebar { height: 34px; flex: none; display: flex; align-items: center; padding: 0 23px 1px 8px; border-bottom: 1px solid #262626; background: linear-gradient(#646464, #484848); }
.lights { display: flex; gap: 8px; }
.light { width: 12px; height: 12px; border-radius: 50%; }
.red { background: radial-gradient(circle at 50% 15%, #fff 0, #ee6a66 35%, #c9302c 65%, #ff9a8e 100%); }
.amber { background: radial-gradient(circle at 50% 15%, #fff 0, #f4b95a 35%, #d98a26 65%, #ffe08a 100%); }
.green { background: radial-gradient(circle at 50% 15%, #fff 0, #84c26a 35%, #4c9a3c 65%, #c3f09c 100%); }
.logo { margin-left: 17px; width: 25px; padding-bottom: 4px; font: 600 21px/28px "Open Sans", sans-serif; color: #a83d6c; }
.bridge { margin-left: 18px; width: 16px; height: 16px; justify-content: center; border: 1px solid #c8c8c8; background: #2c2c2c; font: 10px/14px "Open Sans", sans-serif; }
.zoom-level { margin-left: 36px; gap: 8px; width: 52px; font: 600 12px/20px "Open Sans", sans-serif; }
.sep { width: 2px; height: 20px; flex: none; border-left: 1px solid #333; border-right: 1px solid #666; }
.views { display: flex; gap: 20px; padding-left: 16px; }
.view-menu { gap: 2px; }
.view-icon { width: 18px; height: 16px; }
.workspace { width: 102px; padding: 0 13px 0 12px; justify-content: space-between; font: 700 12px/20px "Open Sans", sans-serif; }
.search { margin-left: 6px; width: 112px; height: 19px; display: flex; align-items: center; padding: 0 3px; border: 1px solid #2a2a2a; background: #a4a4a4; color: #222; }
.search input { flex: 1; }

.control { height: 47px; flex: none; display: flex; align-items: center; padding: 0 4px 2px; border-top: 1px solid #565656; border-bottom: 1px solid #222; background: #484848; }
.grip-v { width: 3px; height: 20px; background: repeating-linear-gradient(#111 0 1px, #484848 1px 2px); }
.refpoint { margin-left: 15px; }
.rows { display: flex; flex-direction: column; gap: 6px; flex: none; }
.row { display: flex; align-items: center; height: 15px; }
.position label { width: 20px; margin-right: 2px; text-align: right; font: 700 10px/15px "Open Sans", sans-serif; }
.position + .position label { width: 19px; }
.g2 { gap: 2px; }
.g3 { gap: 3px; }
.g5 { gap: 5px; }
.g7 { gap: 7px; }
.g10 { gap: 10px; }
.g11 { gap: 11px; }
.end { justify-content: flex-end; }
.between { justify-content: space-between; }
.indent { padding-left: 19px; }
.ml5 { margin-left: 5px; }
.ml9 { margin-left: 9px; }
.pair { display: flex; align-items: center; gap: 1px; }
.spin { width: 14px; height: 15px; flex: none; border: 1px solid #2e2e2e; background: #4e4e4e; color: #d8d8d8; display: flex; flex-direction: column; margin-right: 1px; }
.pair .spin { margin-right: 0; }
.spin button { flex: 1; justify-content: center; }
.spin button::before { content: ""; border: 3px solid transparent; border-top: 0; border-bottom: 4px solid currentColor; }
.spin button + button { border-top: 1px solid #333; }
.spin button + button::before { border-bottom: 0; border-top: 4px solid currentColor; }
.spin.off { color: #888; }
.field { width: 63px; height: 15px; padding: 0 2px; border: 1px solid #333; background: #a6a6a6; color: #6e6e6e; font: 10px/13px "Open Sans", sans-serif; }
.bright { color: #111; }
.w49 { width: 49px; }
.combo { height: 15px; display: flex; border: 1px solid #2e2e2e; background: #a4a4a4; font: 10px/13px "Open Sans", sans-serif; }
.combo select { flex: 1; padding: 0 2px; color: #111; }
.combo i { width: 13px; flex: none; display: flex; align-items: center; justify-content: center; background: #505050; border-left: 1px solid #333; }
.combo.off i { color: #7c7c7c; background: #4c4c4c; }
.w42 { width: 42px; }
.w63 { width: 63px; }
.w64 { width: 64px; }
.w79 { width: 79px; }
.w131 { width: 131px; font-family: "Lato", sans-serif; }
.solid { width: 56px; height: 9px; margin: 2px 0 0 1px; background: #000; }
.hook { width: 18px; height: 9px; margin: 2px 0 0 2px; border: solid #222; border-width: 2px 2px 0 0; }
.bar { width: 2px; height: 36px; flex: none; border-left: 1px solid #323232; border-right: 1px solid #666; margin: 0 5px; }
.rows + .bar { margin-left: 7px; }
.rows + .bar.tight { margin: 0 5px; }
.rows + .bar.wide { margin: 0 5px 0 8px; }
.bar.last { margin: 0 5px 0 8px; }
.link { width: 10px; height: 16px; }
.container { width: 26px; height: 26px; margin-left: 7px; }
.container + .bar { margin: 0 5px 0 3px; }
.trees { width: 44px; }
.trees .row { justify-content: space-between; }
.tree { width: 14px; height: 11px; }
.stack { flex-direction: column; }
.dim { color: #8d8d8d; }
.go { width: 13px; height: 15px; justify-content: center; border: 1px solid #2e2e2e; background: #505050; }
.fx { width: 17px; height: 16px; }
.opacity { width: 52px; height: 15px; display: flex; border: 1px solid #2e2e2e; background: #a4a4a4; }
.opacity input { flex: 1; padding: 0 3px; color: #111; font: 10px/13px "Open Sans", sans-serif; }
.opacity .go { height: 13px; border-width: 0 0 0 1px; }
.wrap { width: 15px; height: 14px; }
.clear { width: 22px; height: 12px; }
.redefine { width: 18px; height: 12px; }
.bolt { width: 12px; height: 16px; }
.menu { height: 36px; align-items: flex-start; padding-top: 3px; }
.menu-icon { width: 15px; height: 10px; }

.body { flex: 1; min-height: 0; display: flex; background: #262626; gap: 2px; }
.toolbox { width: 31px; flex: none; background: #484848; border-right: 1px solid #333; }
.dock-head { width: 100%; height: 12px; background: linear-gradient(#2c2c2c, #383838); border-bottom: 1px solid #222; padding: 0 3px; color: #b8b8b8; }
.dock-head.right { justify-content: flex-end; padding: 0 4px; }
.dbl { width: 8px; height: 6px; }
.grip-h { display: block; width: 20px; height: 4px; margin: 3px auto; background: repeating-linear-gradient(90deg, #111 0 1px, #484848 1px 2px); }
.tools { padding: 6px 3px 0; }
.tool-group { padding-bottom: 3px; border-bottom: 1px solid #333; margin-bottom: 3px; box-shadow: 0 1px #585858; }
.tool { width: 24px; height: 21px; }
.tool svg { width: 24px; height: 21px; }
.active { background: #323232; box-shadow: inset 0 0 0 1px #262626; }
.colors svg { width: 24px; height: 44px; }
.mode { margin-top: 5px; background: #323232; box-shadow: inset 0 0 0 1px #262626; }
.mode svg { width: 24px; height: 20px; }

.document { flex: 1; min-width: 0; display: grid; grid-template: 19px 17px minmax(0, 1fr) 15px / 16px minmax(0, 1fr) 16px; background: #484848; }
.tabs { grid-column: 1 / 4; display: flex; background: linear-gradient(#2e2e2e, #363636); }
.tab { display: flex; align-items: center; width: 158px; padding-left: 8px; gap: 6px; background: #4a4a4a; border-right: 1px solid #222; font: 700 10px/19px "Open Sans", sans-serif; white-space: nowrap; }
.close { width: 10px; justify-content: center; font-size: 12px; }
.ruler-corner { background: linear-gradient(#777, #777) 100% 0 / 1px 100% no-repeat, repeating-linear-gradient(90deg, #777 0 1px, transparent 1px 2px) 0 5px / 100% 1px no-repeat, repeating-linear-gradient(#777 0 1px, transparent 1px 2px) 4px 0 / 1px 100% no-repeat, #212121; }
.ruler-h { width: 100%; height: 17px; background: #212121; overflow: hidden; }
.ruler-v { width: 16px; height: 100%; background: #4a4a4a; overflow: hidden; }
.ruler-h text, .ruler-v text { font: 10px "Open Sans", sans-serif; fill: #b4b4b4; }
.canvas { background: #414141; overflow: hidden; padding: 8px 1px 0 0; display: flex; flex-direction: column; align-items: center; gap: 13px; }
.pasteboard { width: 970px; height: 372px; flex: none; padding-top: 28px; border: 1px solid #000; background: #fff; display: flex; justify-content: center; align-items: flex-start; }
.spread { display: flex; width: 486px; height: 314px; border: 1px solid #000; box-shadow: 1px 1px #000, 1px 2px #000; background: #fff; }
.sheet { flex: 1; padding: 13px 14px; display: flex; }
.sheet + .sheet { border-left: 1px solid #000; padding-left: 13px; }
.margins { flex: 1; border: 1px solid #9b30ff; border-top-color: #ff50ff; border-bottom-color: #ff50ff; }
.scroll-v { grid-column: 3; grid-row: 2 / 4; display: flex; flex-direction: column; background: #343434; border-left: 1px solid #222; border-right: 1px solid #222; color: #d4d4d4; min-height: 0; }
.scroll-v button { height: 16px; justify-content: center; }
.track { flex: 1; display: flex; flex-direction: column; }
.before { flex: 214; border-top: 1px solid #2a2a2a; }
.thumb { flex: 326; background: #929292; border-top: 1px solid #222; }
.after { flex: 82; border-top: 2px solid #2a2a2a; }
.status { grid-column: 1 / 4; display: flex; align-items: center; padding: 0 2px 0 17px; border-top: 1px solid #5a5a5a; background: #484848; font: 10px/14px "Lato", sans-serif; color: #d8d8d8; }
.status > button { margin-right: 8px; }
.gears { width: 19px; height: 10px; }
.step { width: 8px; height: 9px; }
.page-no { width: 91px; justify-content: space-between; }
.pre { width: 17px; height: 14px; }
.profile { width: 113px; justify-content: space-between; }
.status > .errors { width: 83px; gap: 3px; margin-right: 2px; }
.errors svg { margin-left: auto; }
.dot { width: 11px; height: 11px; border-radius: 50%; background: #4fae3c; }
.scroll-h { flex: 1; height: 14px; display: flex; justify-content: space-between; padding: 0 6px; background: #343434; color: #777; border: 1px solid #2a2a2a; border-width: 0 1px; }
.status > .split { margin: 0 4px; }
.split svg { width: 16px; height: 12px; }
.resize { width: 12px; height: 12px; background: conic-gradient(#bbb 25%, transparent 0) 0 0 / 2px 2px; clip-path: polygon(100% 0, 100% 100%, 0 100%); }

.dock { width: 164px; flex: none; background: #484848; }
.panel-group { display: flex; flex-direction: column; padding-bottom: 2px; border-bottom: 1px solid #242424; border-top: 1px solid #565656; }
.panel-group .grip-h { margin: 2px auto 3px; }
.panel { height: 28px; padding-left: 10px; gap: 8px; font: 700 10px/15px "Open Sans", sans-serif; }
.panel span { padding-bottom: 2px; }
.panel svg { width: 19px; height: 18px; }
</style>
